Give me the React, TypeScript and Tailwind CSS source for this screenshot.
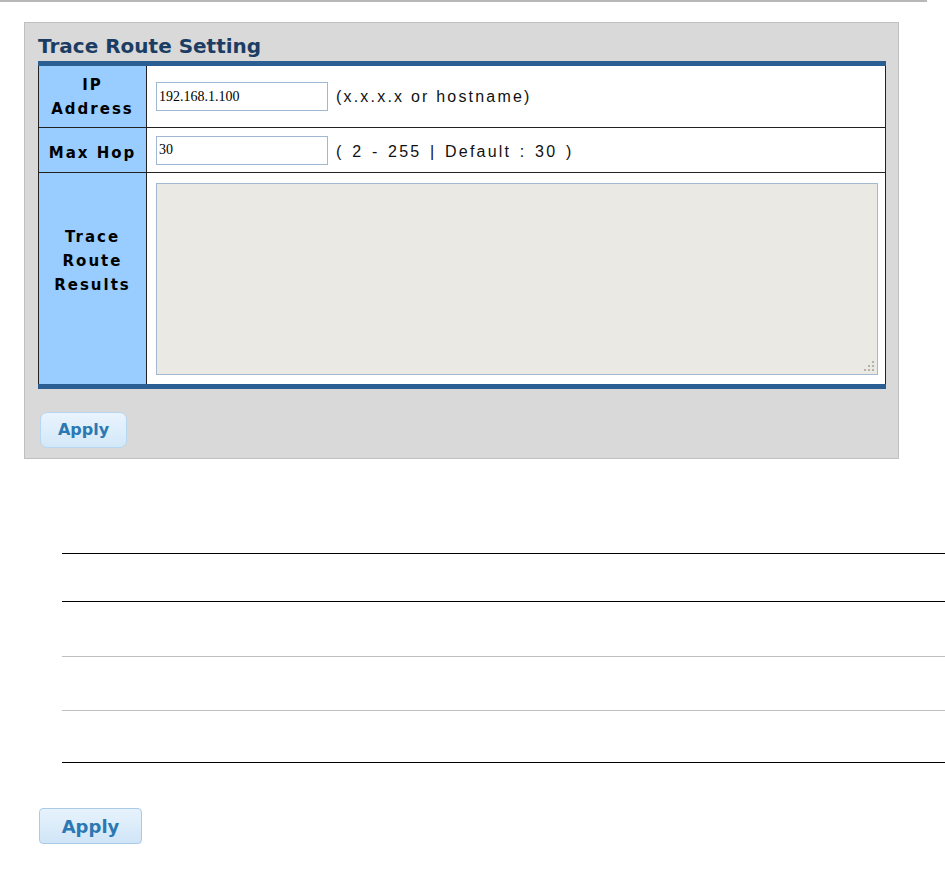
import React from 'react';

const labelCls =
  "w-[108px] shrink-0 bg-[#99ccff] border-r border-[#222] flex items-center justify-center text-center font-['DejaVu_Sans',sans-serif] font-bold text-[15px] leading-[24px] tracking-[2px] text-black";

const hintCls = "ml-[8px] font-['Liberation_Sans',Arial,sans-serif] text-[16px] tracking-[2.2px] text-[#111]";

const inputCls =
  "w-[172px] h-[29px] border border-[#9fb8d3] bg-white px-[2px] font-['Liberation_Serif',serif] text-[14px] text-black outline-none";

export default function App() {
  return (
    <div className="w-[945px] h-[872px] bg-white">
      <div className="h-[2px] w-[927px] bg-[#b8b8b8]" />

      {/* Trace Route panel */}
      <div className="ml-[24px] mt-[20px] w-[875px] h-[437px] border border-[#c0c0c0] bg-[#d9d9d9] px-[13px] pt-[11px]">
        <h2 className="h-[24px] mb-[3px] font-['DejaVu_Sans',sans-serif] font-bold text-[20px] leading-[24px] text-[#1c3d63]">
          Trace Route Setting
        </h2>

        <div className="w-[848px]">
          <div className="h-[5px] bg-[#2b5f93]" />
          <div className="border-x border-[#222]">
            <div className="flex h-[62px] border-b border-[#222]">
              <div className={labelCls}>
                <span>
                  IP
                  <br />
                  Address
                </span>
              </div>
              <div className="flex-1 bg-white flex items-center pl-[9px]">
                <input className={inputCls} defaultValue="192.168.1.100" />
                <span className={hintCls}>(x.x.x.x or hostname)</span>
              </div>
            </div>

            <div className="flex h-[45px] border-b border-[#222]">
              <div className={labelCls + ' pt-[5px]'}>Max Hop</div>
              <div className="flex-1 bg-white flex items-center pl-[9px]">
                <input className={inputCls} defaultValue="30" />
                <span className={hintCls + ' mt-[4px] [word-spacing:2px]'}>( 2 - 255 | Default : 30 )</span>
              </div>
            </div>

            <div className="flex h-[211px]">
              <div className={labelCls + ' pb-[36px]'}>
                <span>
                  Trace
                  <br />
                  Route
                  <br />
                  Results
                </span>
              </div>
              <div className="flex-1 bg-white pl-[9px] pr-[7px] pt-[10px] pb-[9px]">
                <div className="relative h-full">
                  <textarea className="block w-full h-full resize-none border border-[#a3b9d2] bg-[#ebe9e3] outline-none" />
                  {/* resize grip */}
                  <svg className="absolute right-[4px] bottom-[4px]" width="10" height="10" viewBox="0 0 10 10">
                    <g fill="#b4b2aa">
                      <rect x="8" y="0" width="2" height="2" />
                      <rect x="4" y="4" width="2" height="2" />
                      <rect x="8" y="4" width="2" height="2" />
                      <rect x="0" y="8" width="2" height="2" />
                      <rect x="4" y="8" width="2" height="2" />
                      <rect x="8" y="8" width="2" height="2" />
                    </g>
                  </svg>
                </div>
              </div>
            </div>
          </div>
          <div className="h-[5px] bg-[#2b5f93]" />
        </div>

        <button className="mt-[23px] ml-[2px] w-[87px] h-[36px] rounded-[7px] border border-[#b7d6ef] bg-gradient-to-b from-[#e9f4fd] via-[#deeefb] to-[#d3e8f8] font-['DejaVu_Sans',sans-serif] font-bold text-[16px] text-[#2b78b2]">
          Apply
        </button>
      </div>

      {/* empty parameter table lines */}
      <div className="ml-[62px] mt-[94px] w-[883px]">
        <div className="h-[1px] bg-black" />
        <div className="h-[47px]" />
        <div className="h-[1px] bg-black" />
        <div className="h-[54px]" />
        <div className="h-[1px] bg-[#c0c0c0]" />
        <div className="h-[53px]" />
        <div className="h-[1px] bg-[#c0c0c0]" />
        <div className="h-[51px]" />
        <div className="h-[1px] bg-black" />
      </div>

      <button className="ml-[39px] mt-[45px] w-[103px] h-[36px] rounded-[4px] border border-[#a9cbe8] bg-gradient-to-b from-[#e6f2fc] via-[#dcedfa] to-[#cfe4f6] font-['DejaVu_Sans',sans-serif] font-bold text-[18px] text-[#2b78b2]">
        Apply
      </button>
    </div>
  );
}
